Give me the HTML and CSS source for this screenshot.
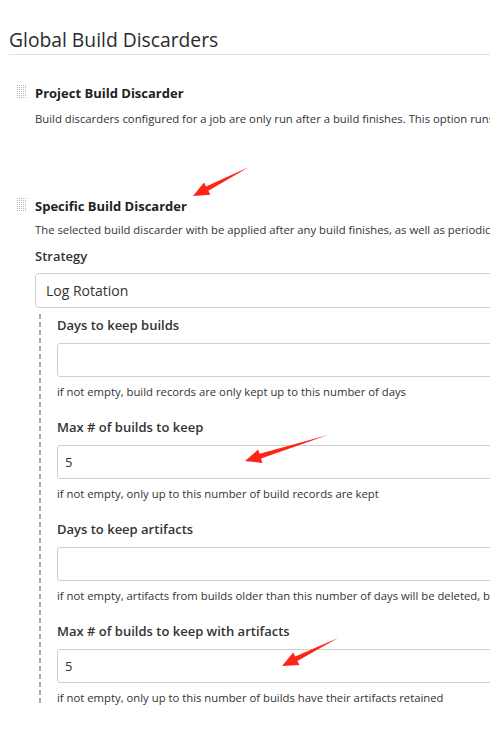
FILE: index.html
```html
<!DOCTYPE html>
<html lang="en">
<head>
<meta charset="utf-8">
<title>Global Build Discarders</title>
<link rel="stylesheet" href="styles.css">
</head>
<body>
<div class="page">
  <h1 class="section-title">Global Build Discarders</h1>

  <div class="discarder discarder-project">
    <div class="handle"></div>
    <div class="discarder-body">
      <div class="discarder-title">Project Build Discarder</div>
      <div class="discarder-desc">Build discarders configured for a job are only run after a build finishes. This option runs them periodically as well.</div>
    </div>
  </div>

  <div class="discarder discarder-specific">
    <div class="handle"></div>
    <div class="discarder-body">
      <div class="discarder-title">Specific Build Discarder</div>
      <div class="discarder-desc">The selected build discarder with be applied after any build finishes, as well as periodically.</div>
      <div class="strategy-label">Strategy</div>
      <div class="select-box">Log Rotation</div>
      <div class="nested">
        <div class="field">
          <div class="field-label">Days to keep builds</div>
          <div class="text-input"></div>
          <div class="field-help">if not empty, build records are only kept up to this number of days</div>
        </div>
        <div class="field">
          <div class="field-label">Max # of builds to keep</div>
          <div class="text-input">5</div>
          <div class="field-help">if not empty, only up to this number of build records are kept</div>
        </div>
        <div class="field">
          <div class="field-label">Days to keep artifacts</div>
          <div class="text-input"></div>
          <div class="field-help">if not empty, artifacts from builds older than this number of days will be deleted, but the logs, history, reports, etc for the build will be kept</div>
        </div>
        <div class="field">
          <div class="field-label">Max # of builds to keep with artifacts</div>
          <div class="text-input">5</div>
          <div class="field-help">if not empty, only up to this number of builds have their artifacts retained</div>
        </div>
      </div>
    </div>
  </div>

  <svg class="annotations" width="490" height="732" viewBox="0 0 490 732" aria-hidden="true">
    <polygon points="249,167 206.0,186.4 204,182.4 193,196 210.4,194.8 208.4,190.8" />
    <polygon points="328,435 259.6,453.8 258.2,449.5 245,461 262.4,462.9 261.0,458.6" />
    <polygon points="338,638 295.2,656.6 293.2,652.5 282,666 299.4,665.1 297.4,661.0" />
  </svg>
</div>
</body>
</html>
```

FILE: styles.css
```css
html, body {
  margin: 0;
  padding: 0;
  background: #fff;
  overflow: hidden;
}

body {
  font-family: "Open Sans", "Noto Sans", sans-serif;
  color: #333;
}

.page {
  position: relative;
  width: 700px;
  height: 732px;
  padding: 0 0 0 9px;
  white-space: nowrap;
}

.section-title {
  margin: 0;
  padding: 27px 0 1px;
  font-size: 19.3px;
  font-weight: 400;
  line-height: 26px;
  color: #2b2b2b;
  border-bottom: 1px solid #e2e2e2;
}

.discarder {
  display: flex;
  gap: 8px;
  padding-left: 7px;
}

.discarder-project {
  margin-top: 29px;
}

.discarder-specific {
  margin-top: 70px;
}

.handle {
  flex: none;
  width: 11px;
  height: 15px;
  margin-top: 0;
  background-color: #b3b3b3;
  background-image:
    linear-gradient(to right, #fff 1px, transparent 1px),
    linear-gradient(to bottom, #fff 1px, transparent 1px);
  background-size: 2px 2px;
}

.discarder-body {
  flex: 1;
  min-width: 0;
}

.discarder-title {
  font-size: 13px;
  font-weight: 700;
  line-height: 18px;
  color: #222;
}

.discarder-desc {
  margin-top: 9px;
  font-size: 11.3px;
  line-height: 16px;
  color: #333;
}

.discarder-specific .discarder-desc {
  margin-top: 7px;
}

.strategy-label {
  margin-top: 9px;
  font-size: 13px;
  font-weight: 600;
  line-height: 18px;
}

.select-box {
  margin-top: 8px;
  height: 33px;
  line-height: 33px;
  padding-left: 10px;
  border: 1px solid #cfcfcf;
  border-radius: 4px;
  font-size: 14px;
  color: #333;
}

.nested {
  margin: 6px 0 0 4px;
  padding: 2px 0 0 18px;
  background: linear-gradient(#a8a8a8 5px, transparent 5px) 0 0 / 2px 8px repeat-y;
}

.field + .field {
  margin-top: 18px;
}

.field-label {
  font-size: 13px;
  font-weight: 600;
  line-height: 18px;
}

.text-input {
  margin-top: 9px;
  height: 32px;
  line-height: 32px;
  padding-left: 7px;
  border: 1px solid #cfcfcf;
  border-radius: 3px;
  font-size: 13px;
}

.field-help {
  margin-top: 7px;
  font-size: 11.3px;
  line-height: 16px;
  color: #333;
}

.annotations {
  position: absolute;
  left: 0;
  top: 0;
  pointer-events: none;
}

.annotations polygon {
  fill: #ff2418;
}
```
